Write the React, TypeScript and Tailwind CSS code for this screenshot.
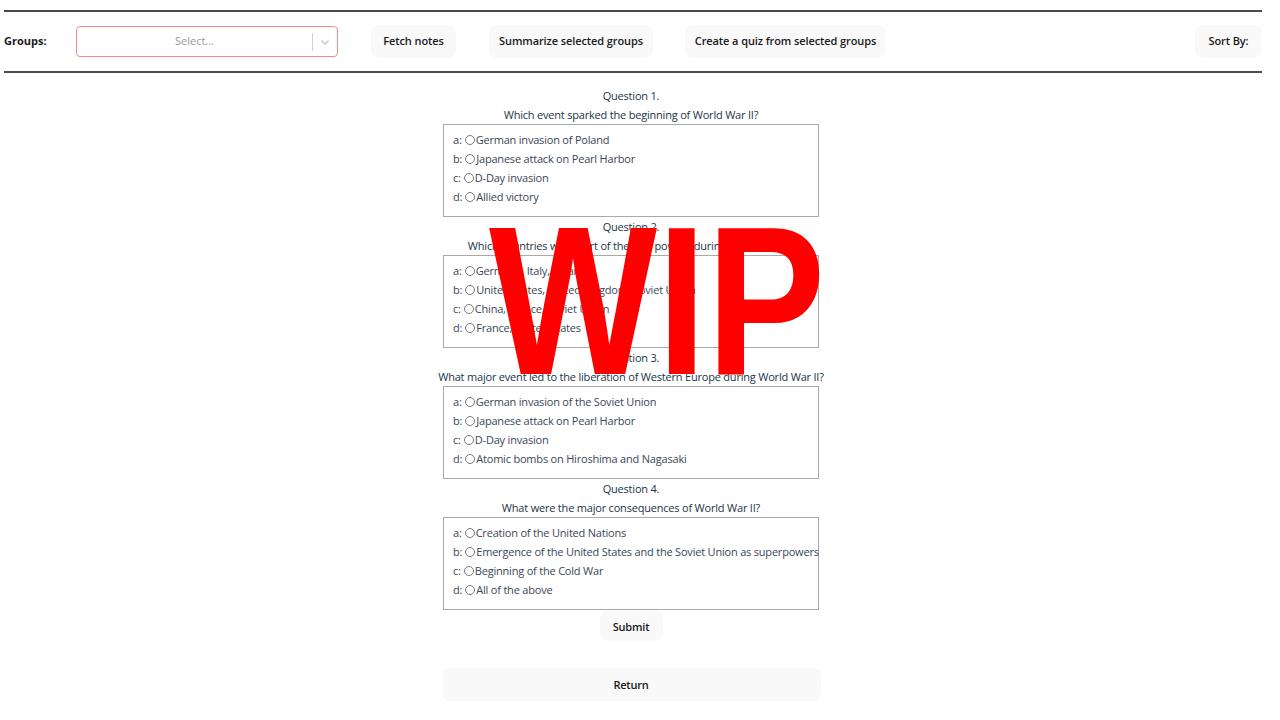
import React from "react"

interface Question {
    title: string
    text: string
    options: string[]
}

const questions: Question[] = [
    {
        title: "Question 1.",
        text: "Which event sparked the beginning of World War II?",
        options: ["German invasion of Poland", "Japanese attack on Pearl Harbor", "D-Day invasion", "Allied victory"],
    },
    {
        title: "Question 2.",
        text: "Which countries were part of the Axis powers during World War II?",
        options: ["Germany, Italy, Japan", "United States, United Kingdom, Soviet Union", "China, France, Soviet Union", "France, United States"],
    },
    {
        title: "Question 3.",
        text: "What major event led to the liberation of Western Europe during World War II?",
        options: ["German invasion of the Soviet Union", "Japanese attack on Pearl Harbor", "D-Day invasion", "Atomic bombs on Hiroshima and Nagasaki"],
    },
    {
        title: "Question 4.",
        text: "What were the major consequences of World War II?",
        options: ["Creation of the United Nations", "Emergence of the United States and the Soviet Union as superpowers", "Beginning of the Cold War", "All of the above"],
    },
]

const letters = ["a", "b", "c", "d"]

function HeaderButton({ children, className = "" }: { children: React.ReactNode; className?: string }) {
    return (
        <button className={`h-[33px] rounded-lg bg-[#f9f9f9] text-[11px] tracking-[-0.1px] font-semibold text-[#1a1a1a] ${className}`}>
            {children}
        </button>
    )
}

export default function App() {
    return (
        <div className="relative w-[1262px] bg-white pt-[10px] text-[#213547] font-['Open_Sans',sans-serif]">
            <div className="ml-[4px] w-[1258px] h-[63px] border-y-2 border-[#4a4a4a] flex items-center">
                <span className="w-[72px] text-[11px] font-bold text-[#1a1a1a]">Groups:</span>
                <div className="w-[262px] h-[31px] border border-[#f08c8c] rounded-[4px] flex items-center">
                    <span className="flex-1 text-center text-[11px] text-[#9a9a9a]">Select...</span>
                    <span className="w-px h-[18px] bg-[#d0d0d0]" />
                    <span className="w-[24px] flex justify-center">
                        <svg width="10" height="10" viewBox="0 0 10 10" fill="none" stroke="#c8c8c8" strokeWidth="1.4">
                            <path d="M1.5 3.5 L5 7 L8.5 3.5" />
                        </svg>
                    </span>
                </div>
                <HeaderButton className="ml-[33px] w-[85px]">Fetch notes</HeaderButton>
                <HeaderButton className="ml-[33px] w-[164px]">Summarize selected groups</HeaderButton>
                <HeaderButton className="ml-[32px] w-[201px]">Create a quiz from selected groups</HeaderButton>
                <HeaderButton className="ml-auto w-[67px]">Sort By:</HeaderButton>
            </div>

            <div className="flex flex-col items-center pt-[13px] text-[11px] tracking-[-0.2px] leading-[19px]">
                {questions.map((q) => (
                    <div key={q.title} className="flex flex-col items-center">
                        <div>{q.title}</div>
                        <div className="whitespace-nowrap">{q.text}</div>
                        <div className="w-[376px] h-[93px] border border-[#a9a9a9] pl-[9px] pt-[5px] text-[#3a4658]">
                            {q.options.map((opt, i) => (
                                <div key={i} className="flex items-center whitespace-nowrap">
                                    <span>{letters[i]}:</span>
                                    <span className="shrink-0 ml-[3px] mr-[1px] w-[10px] h-[10px] rounded-full border border-[#7a7a7a]" />
                                    <span>{opt}</span>
                                </div>
                            ))}
                        </div>
                    </div>
                ))}
                <button className="mt-[1px] w-[63px] h-[30px] rounded-lg bg-[#f9f9f9] text-[11px] font-semibold text-[#1a1a1a]">
                    Submit
                </button>
                <button className="mt-[27px] w-[379px] h-[33px] rounded-lg bg-[#f9f9f9] text-[11px] font-semibold text-[#1a1a1a]">
                    Return
                </button>
            </div>

            <div className="absolute left-[489px] top-[195px] pointer-events-none">
                <div className="origin-left scale-x-[0.84] text-[212px] leading-none font-bold text-[#ff0000] font-['Liberation_Sans',Arial,sans-serif]">
                    WIP
                </div>
            </div>
        </div>
    )
}
